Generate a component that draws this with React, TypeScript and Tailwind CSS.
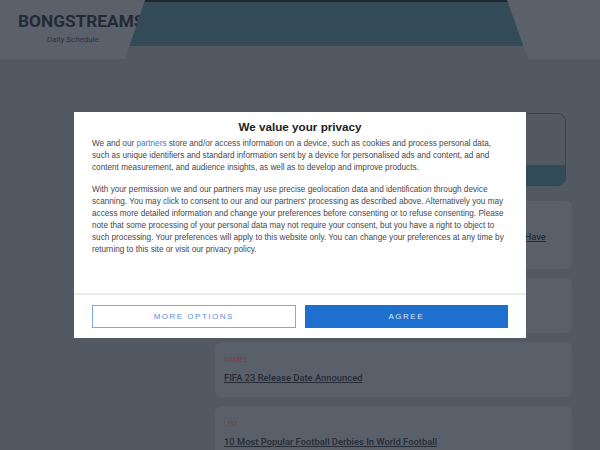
import React from "react";

const posts = [
  { tag: "FOOTBALL", title: "Famous Footballers Who Chose A New National Team Than They Could Have\nPlayed For" },
  { tag: "NEWS", title: "Premier League Fixtures Announced" },
  { tag: "GAMES", title: "FIFA 23 Release Date Announced" },
  { tag: "LIST", title: "10 Most Popular Football Derbies In World Football" },
];

export default function App() {
  return (
    <div className="relative h-[450px] w-[600px] overflow-hidden bg-[#535963] font-['Roboto',sans-serif]">
      {/* Header */}
      <div className="relative flex h-[59px] bg-[#5b616b]">
        <div className="flex w-[146px] flex-col items-start pl-[18px] pt-[11px]">
          <h1 className="whitespace-nowrap text-[17.3px] font-bold leading-[21px] text-[#232a35]">BONGSTREAMS</h1>
          <p className="ml-[29px] mt-[2px] text-[8px] leading-[12px] text-[#2d343e]">Daily Schedule</p>
        </div>
        <div className="absolute left-[125px] top-0 flex h-[59px] w-[403px] flex-col [clip-path:polygon(20px_0,382px_0,403px_100%,0_100%)]">
          <div className="h-[2px] bg-[#1f2630]" />
          <div className="h-[44px] bg-[#334b59]" />
          <div className="flex-1 bg-[#535963]" />
        </div>
      </div>

      {/* Content */}
      <div className="flex pt-[54px]">
        <div className="w-[215px]" />
        <div className="flex w-[357px] flex-col">
          <div className="mb-[15px] flex h-[73px] w-[351px] flex-col overflow-hidden rounded-lg border border-[#3b424c]">
            <div className="flex-1" />
            <div className="h-[20px] bg-[#334b59]" />
          </div>
          <div className="flex flex-col gap-[9px]">
            {posts.map((p) => (
              <div key={p.title} className="rounded-md bg-[#5a606a] px-[9px] pb-[13px] pt-[12px]">
                <p className="text-[7px] uppercase leading-[12px] text-[#7a3d43]">{p.tag}</p>
                <p className="mt-[5px] whitespace-pre-line text-[9.4px] font-medium leading-[13px] text-[#262c36] underline">{p.title}</p>
              </div>
            ))}
          </div>
        </div>
      </div>

      {/* Consent dialog */}
      <div className="absolute left-[74px] top-[112px] flex h-[226px] w-[452px] flex-col bg-white font-['Liberation_Sans',Arial,sans-serif] text-[#45484d]">
        <h2 className="mt-[7px] text-center text-[11.7px] font-bold leading-[16px] text-[#222]">We value your privacy</h2>
        <div className="px-[18px] pt-[3px] text-[8.2px] leading-[12px]">
          <p>
            We and our <a className="text-[#3a7bd5]">partners</a> store and/or access information on a device, such as cookies and process personal data, such as unique identifiers and standard information sent by a device for personalised ads and content, ad and content measurement, and audience insights, as well as to develop and improve products.
          </p>
          <p className="mt-[10px]">
            With your permission we and our partners may use precise geolocation data and identification through device scanning. You may click to consent to our and our partners' processing as described above. Alternatively you may access more detailed information and change your preferences before consenting or to refuse consenting. Please note that some processing of your personal data may not require your consent, but you have a right to object to such processing. Your preferences will apply to this website only. You can change your preferences at any time by returning to this site or visit our privacy policy.
          </p>
        </div>
        <div className="flex-1" />
        <div className="flex gap-[9px] border-t-2 border-[#ececec] px-[18px] pb-[10px] pt-[10px]">
          <button className="h-[23px] w-[204px] border border-[#7fa9e2] text-[8px] tracking-[1.5px] text-[#5a8fd8]">MORE OPTIONS</button>
          <button className="h-[23px] w-[204px] bg-[#1f6fce] text-[8px] tracking-[1.5px] text-[#dce8f6]">AGREE</button>
        </div>
      </div>
    </div>
  );
}
